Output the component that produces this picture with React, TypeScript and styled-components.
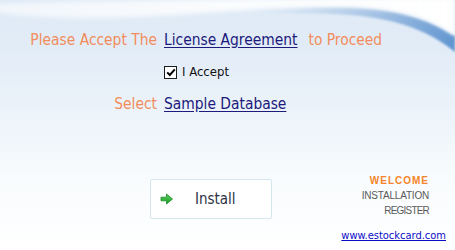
import React from "react";
import styled, { createGlobalStyle } from "styled-components";

const Global = createGlobalStyle`
  html, body { margin: 0; padding: 0; }
  body { width: 455px; height: 250px; overflow: hidden; background: #fff; }
  #root { width: 455px; height: 250px; }
`;

const Page = styled.div`
  position: relative;
  width: 455px;
  height: 250px;
  overflow: hidden;
  font-family: "DejaVu Sans Condensed", "DejaVu Sans", sans-serif;
  background: linear-gradient(180deg, #dfeaf6 0%, #e2ecf7 20%, #ecf3fa 45%, #f8fbfd 70%, #ffffff 100%);
  display: flex;
  flex-direction: column;
`;

const Backdrop = styled.svg`
  position: absolute;
  left: 0;
  top: 0;
  width: 455px;
  height: 250px;
  z-index: 0;
`;

const Content = styled.div`
  position: relative;
  z-index: 1;
  display: flex;
  flex-direction: column;
  flex: 1;
`;

const Form = styled.div`
  display: grid;
  grid-template-columns: 127px auto;
  column-gap: 7px;
  padding: 30px 0 0 30px;
  align-items: center;
`;

const Label = styled.span`
  color: #f28c5c;
  font-size: 15.4px;
  text-align: right;
  white-space: nowrap;
  height: 32px;
  line-height: 20px;
`;

const Cell = styled.div<{ $h?: number }>`
  display: flex;
  align-items: flex-start;
  height: ${(p) => p.$h ?? 32}px;
  font-size: 15.4px;
  line-height: 20px;
  white-space: nowrap;
`;

const Link = styled.a`
  color: #1c1a7c;
  text-decoration: underline;
  text-underline-offset: 2px;
  cursor: pointer;
`;

const Suffix = styled.span`
  color: #f28c5c;
  margin-left: 11px;
`;

const CheckLabel = styled.label`
  display: flex;
  align-items: center;
  gap: 5px;
  font-size: 13px;
  color: #111;
  margin-top: 0px;
`;

const Box = styled.span`
  width: 11px;
  height: 11px;
  border: 1px solid #1c1c1c;
  background: #fff;
  display: flex;
  align-items: center;
  justify-content: center;
`;

const Bottom = styled.div`
  display: flex;
  justify-content: space-between;
  align-items: flex-start;
  padding: 53px 26px 0 150px;
`;

const InstallButton = styled.button`
  width: 122px;
  height: 40px;
  box-sizing: border-box;
  border: 1px solid #d6e6ee;
  border-radius: 2px;
  background: #fff;
  display: flex;
  align-items: center;
  padding: 0 0 0 9px;
  font-family: "DejaVu Sans Condensed", "DejaVu Sans", sans-serif;
  font-size: 15px;
  color: #2c3344;
  cursor: pointer;
`;

const ButtonText = styled.span`
  margin-left: 21px;
`;

const Menu = styled.nav`
  display: flex;
  flex-direction: column;
  align-items: flex-end;
  margin-top: -6px;
  font-family: "Liberation Sans", Arial, sans-serif;
`;

const MenuItem = styled.span<{ $active?: boolean; $spacing?: number }>`
  font-size: 10px;
  font-weight: ${(p) => (p.$active ? 700 : 400)};
  color: ${(p) => (p.$active ? "#f5852a" : "#5a5a5a")};
  letter-spacing: ${(p) => p.$spacing ?? 0}px;
  line-height: 15px;
`;

const Footer = styled.div`
  display: flex;
  justify-content: flex-end;
  padding: 10px 9px 0 0;
`;

const SiteLink = styled.a`
  font-family: "DejaVu Sans Condensed", "DejaVu Sans", sans-serif;
  font-size: 11px;
  color: #0c0cc8;
  text-decoration: underline;
`;

const Arrow = () => (
  <svg width="14" height="12" viewBox="0 0 14 12">
    <defs>
      <linearGradient id="ag" x1="0" y1="0" x2="0" y2="1">
        <stop offset="0" stopColor="#5fd35f" />
        <stop offset="1" stopColor="#169a24" />
      </linearGradient>
    </defs>
    <path d="M1 4.2 H6.5 V1 L12.5 6 L6.5 11 V7.8 H1 Z" fill="url(#ag)" stroke="#1a8a2a" strokeWidth="0.8" strokeLinejoin="round" />
  </svg>
);

const Check = () => (
  <svg width="10" height="9" viewBox="0 0 10 9">
    <path d="M1.2 4.4 L3.8 7 L8.8 1.4" fill="none" stroke="#000" strokeWidth="2" />
  </svg>
);

export default function App() {
  return (
    <Page>
      <Global />
      <Backdrop viewBox="0 0 455 250">
        <defs>
          <linearGradient id="band" x1="0" y1="0" x2="1" y2="0">
            <stop offset="0" stopColor="#ffffff" stopOpacity="0.55" />
            <stop offset="0.5" stopColor="#ffffff" stopOpacity="0.85" />
            <stop offset="1" stopColor="#ffffff" stopOpacity="1" />
          </linearGradient>
          <linearGradient id="swoosh" x1="0" y1="0" x2="1" y2="0">
            <stop offset="0" stopColor="#c9dcef" stopOpacity="0" />
            <stop offset="0.45" stopColor="#a9c6e6" stopOpacity="0.7" />
            <stop offset="1" stopColor="#5f94cf" stopOpacity="1" />
          </linearGradient>
          <filter id="soft" x="-0.1" y="-0.5" width="1.2" height="2">
            <feGaussianBlur stdDeviation="2" />
          </filter>
          <filter id="soft2" x="-0.1" y="-0.5" width="1.2" height="2">
            <feGaussianBlur stdDeviation="1.2" />
          </filter>
        </defs>
        <path d="M250 10 C300 7 330 6 350 7 C400 9 430 20 455 36 L455 52 C430 32 400 19 350 15 C320 13 290 13 250 13 Z" fill="url(#swoosh)" filter="url(#soft2)" />
        <path d="M-10 4 C60 2 200 -2 455 -2 V36 C430 18 400 8 340 7 C260 6 180 17 90 18 C50 18 15 15 -10 12 Z" fill="url(#band)" filter="url(#soft)" />
      </Backdrop>
      <Content>
        <Form>
          <Label>Please Accept The</Label>
          <Cell>
            <Link>License Agreement</Link>
            <Suffix>to Proceed</Suffix>
          </Cell>
          <span />
          <Cell>
            <CheckLabel>
              <Box>
                <Check />
              </Box>
              I Accept
            </CheckLabel>
          </Cell>
          <Label>Select</Label>
          <Cell>
            <Link>Sample Database</Link>
          </Cell>
        </Form>
        <Bottom>
          <InstallButton>
            <Arrow />
            <ButtonText>Install</ButtonText>
          </InstallButton>
          <Menu>
            <MenuItem $active $spacing={1}>WELCOME</MenuItem>
            <MenuItem $spacing={-0.2}>INSTALLATION</MenuItem>
            <MenuItem $spacing={-0.8}>REGISTER</MenuItem>
          </Menu>
        </Bottom>
        <Footer>
          <SiteLink>www.estockcard.com</SiteLink>
        </Footer>
      </Content>
    </Page>
  );
}
